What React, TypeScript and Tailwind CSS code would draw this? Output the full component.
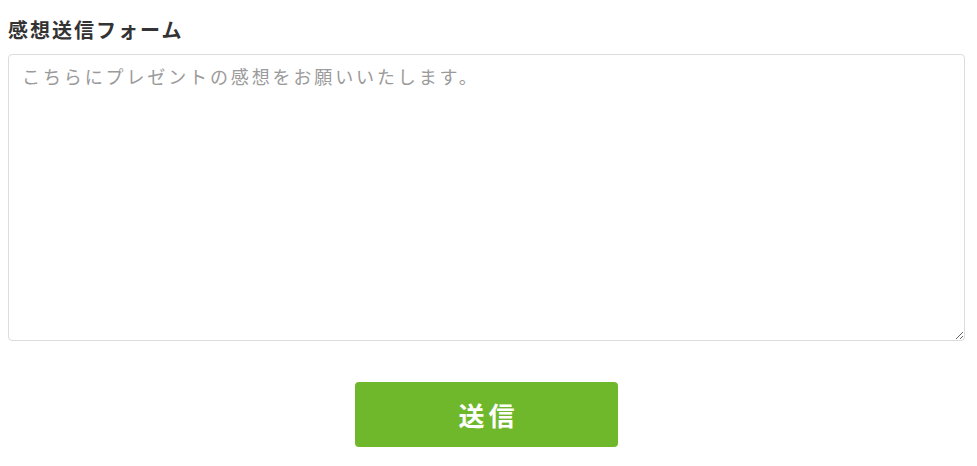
import React from "react";

export default function App() {
  return (
    <div
      className="w-[977px] bg-white pl-2 pr-3 pt-[16px]"
      style={{ fontFamily: '"Noto Sans CJK JP", "Noto Sans", sans-serif' }}
    >
      <h2 className="text-[20px] leading-[28px] font-bold tracking-[0.1em] text-[#333333] mb-[10px]">
        感想送信フォーム
      </h2>
      <textarea
        className="block w-full h-[287px] border border-[#dcdcdc] rounded-[4px] px-[13px] py-[8px] text-[18px] leading-[27px] tracking-[0.16em] text-[#333333] placeholder:text-[#9a9a9a] outline-none"
        placeholder="こちらにプレゼントの感想をお願いいたします。"
      />
      <div className="flex justify-center pt-[41px]">
        <button className="w-[263px] h-[65px] rounded-[4px] bg-[#70b82b] text-white text-[26px] font-bold tracking-[0.15em] pl-[0.15em]">
          送信
        </button>
      </div>
    </div>
  );
}
